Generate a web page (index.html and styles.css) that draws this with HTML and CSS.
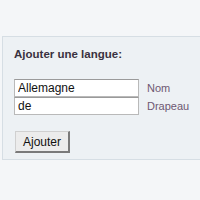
FILE: index.html
```html
<!DOCTYPE html>
<html lang="fr">
<head>
  <meta charset="UTF-8" />
  <title>Langues</title>
  <link rel="stylesheet" href="styles.css">
</head>
<body>

  <div class="panel">
    <h2>Ajouter une langue:</h2>

    <div class="row">
      <input type="text" value="Allemagne">
      <label>Nom</label>
    </div>
    <div class="row">
      <input type="text" value="de">
      <label>Drapeau</label>
    </div>

    <button>Ajouter</button>
  </div>

</body>
</html>
```

FILE: styles.css
```css
body {
  margin: 0;
  background: #f4f6f8;
  font-family: 'Liberation Sans', Arial, sans-serif;
}
.panel {
  margin: 36px 0 0 2px;
  padding: 10px 11px 6px;
  background: #edf1f4;
  border: 1px solid #d6dee4;
  border-right: none;
}
h2 {
  margin: 0 0 18px;
  font-size: 11.5px;
  line-height: 14px;
  font-weight: bold;
  color: #3a3140;
}
.row {
  display: flex;
  align-items: center;
  gap: 8px;
}
input {
  box-sizing: border-box;
  width: 125px;
  height: 18px;
  margin: 0;
  padding: 0 3px;
  border: 1px solid #b9b9b9;
  border-top-color: #9a9a9a;
  background: #fff;
  font-family: 'Liberation Sans', Arial, sans-serif;
  font-size: 12px;
  color: #111;
}
label {
  font-size: 11px;
  color: #6e5872;
}
button {
  box-sizing: border-box;
  margin: 16px 0 0 1px;
  width: 55px;
  height: 22px;
  padding: 0;
  background: #ececec;
  border: 1px solid #d0d0d0;
  border-right: 2px solid #7a7a7a;
  border-bottom: 2px solid #7a7a7a;
  font-family: 'Liberation Sans', Arial, sans-serif;
  font-size: 12px;
  color: #111;
}
```
